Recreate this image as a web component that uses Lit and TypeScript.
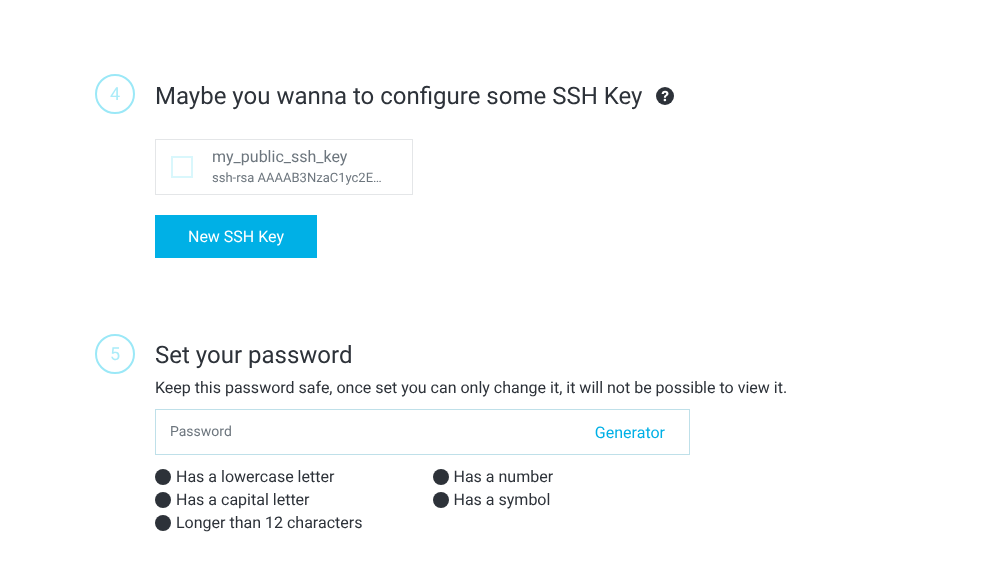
import { LitElement, html, css } from "lit";
import { customElement } from "lit/decorators.js";

@customElement("app-root")
export class AppRoot extends LitElement {
  static styles = css`
    :host { display: block; width: 1002px; height: 570px; background: #fff; overflow: hidden; text-rendering: geometricPrecision;
      font-family: Roboto, sans-serif; color: #2d3239; box-sizing: border-box; padding: 74px 0 0 95px; }
    .section { display: flex; gap: 20px; align-items: flex-start; will-change: transform; }
    .section + .section { margin-top: 76px; }
    .num { flex: none; width: 40px; height: 40px; box-sizing: border-box; border: 2px solid #9be8f7; border-radius: 50%;
      display: flex; align-items: center; justify-content: center; color: #abecf9; font-size: 18px; font-weight: 400; }
    .body { display: flex; flex-direction: column; align-items: flex-start; }
    .title { display: flex; align-items: center; height: 44px; font-size: 24px; font-weight: 400; line-height: 44px; margin: 0; }
    .title svg { margin-left: 14px; }
    .card { margin-top: 21px; width: 258px; height: 56px; box-sizing: border-box; border: 1px solid #e4e6e8; display: flex; align-items: center; padding-left: 15px; }
    .check { width: 22px; height: 22px; box-sizing: border-box; border: 2px solid #d9f7fc; margin-right: 19px; flex: none; }
    .name { font-size: 16px; line-height: 20px; color: #6d767e; }
    .key { font-size: 13px; line-height: 18px; color: #6d767e; margin-top: 3px; margin-bottom: -1px; }
    .btn { margin-top: 20px; width: 162px; height: 43px; background: #00b0e6; color: #fff; border: 0; font: 400 16px Roboto, sans-serif; padding: 0 0 1px; text-rendering: geometricPrecision; }
    .s5 .title { height: 42px; line-height: 42px; }
    .desc { font-size: 16px; line-height: 22px; margin: 1px 0 0; }
    .field { margin-top: 10px; width: 535px; height: 46px; box-sizing: border-box; border: 1px solid #bfe0e9; display: flex; align-items: center; justify-content: space-between; padding: 0 24px 0 14px; }
    .ph { font-size: 14px; color: #6d767e; padding-bottom: 1px; }
    .gen { font-size: 16px; color: #00b0e6; }
    .rules { margin-top: 10px; display: grid; grid-template-columns: 277.5px auto; grid-auto-rows: 23px; font-size: 16px; }
    .rule { display: flex; align-items: center; gap: 5px; line-height: 23px; }
    .dot { width: 16px; height: 16px; border-radius: 50%; background: #2d3239; flex: none; }
  `;
  private rule(t: string) { return html`<div class="rule"><span class="dot"></span>${t}</div>`; }
  render() {
    return html`
      <div class="section">
        <div class="num">4</div>
        <div class="body">
          <h2 class="title">Maybe you wanna to configure some SSH Key
            <svg width="18" height="18" viewBox="0 0 18 18"><circle cx="9" cy="9" r="9" fill="#2d3239"/><path d="M5.6 7C5.7 4.9 7.1 3.7 9.1 3.7c2 0 3.4 1.2 3.4 2.9 0 1.2-.6 1.9-1.5 2.5-.8.5-1 .8-1 1.6H7.9c0-1.5.4-2.1 1.3-2.7.7-.5 1-.8 1-1.3 0-.6-.5-1-1.1-1-.7 0-1.2.5-1.3 1.3z" fill="#fff"/><circle cx="8.9" cy="13" r="1.3" fill="#fff"/></svg>
          </h2>
          <div class="card">
            <div class="check"></div>
            <div><div class="name">my_public_ssh_key</div><div class="key">ssh-rsa AAAAB3NzaC1yc2E…</div></div>
          </div>
          <button class="btn">New SSH Key</button>
        </div>
      </div>
      <div class="section s5">
        <div class="num">5</div>
        <div class="body">
          <h2 class="title">Set your password</h2>
          <p class="desc">Keep this password safe, once set you can only change it, it will not be possible to view it.</p>
          <div class="field"><span class="ph">Password</span><span class="gen">Generator</span></div>
          <div class="rules">
            ${this.rule("Has a lowercase letter")}${this.rule("Has a number")}
            ${this.rule("Has a capital letter")}${this.rule("Has a symbol")}
            ${this.rule("Longer than 12 characters")}
          </div>
        </div>
      </div>
    `;
  }
}
